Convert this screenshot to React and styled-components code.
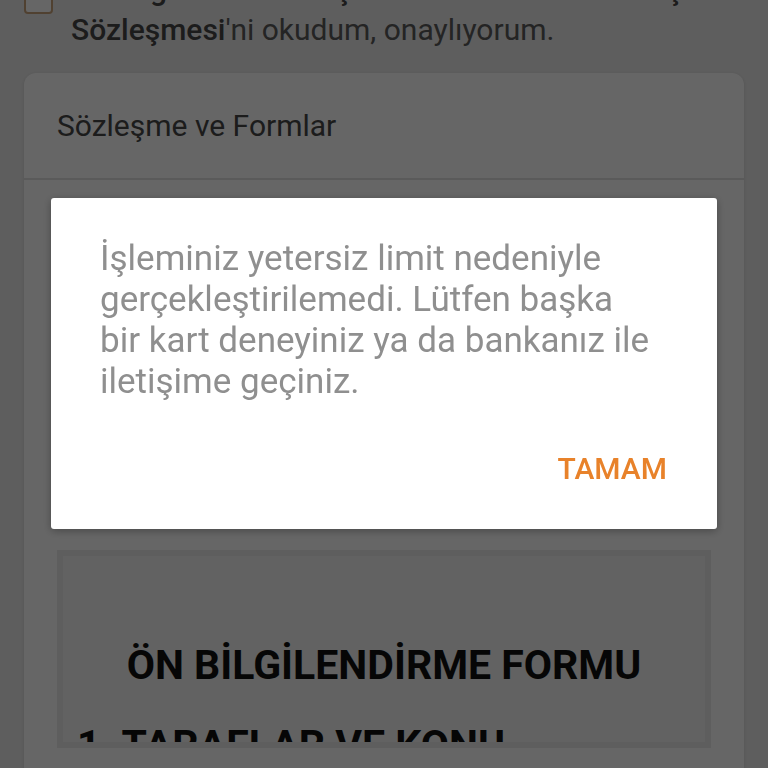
import React from "react";
import styled, { createGlobalStyle } from "styled-components";

const GlobalStyle = createGlobalStyle`
  html, body { margin: 0; padding: 0; }
  body {
    background: #ececec;
    font-family: Roboto, "Noto Sans", "Liberation Sans", sans-serif;
    overflow: hidden;
  }
`;

const Page = styled.div`
  height: 768px;
  overflow: hidden;
  padding: 0 24px;
  box-sizing: border-box;
`;

const ConsentRow = styled.div`
  display: flex;
  align-items: flex-start;
  gap: 18px;
  margin-top: -30px;
`;

const Checkbox = styled.span`
  flex: none;
  width: 29px;
  height: 29px;
  margin-top: 15px;
  border: 2px solid #c9a27a;
  border-radius: 4px;
  box-sizing: border-box;
  background: #fff;
`;

const ConsentText = styled.p`
  margin: 0;
  font-size: 30px;
  line-height: 40px;
  color: #5a5a5a;
  b { font-weight: 500; color: #484848; }
`;

const Card = styled.section`
  margin-top: 23px;
  background: #fff;
  border-radius: 12px;
  box-shadow: 0 1px 4px rgba(0, 0, 0, 0.12);
  overflow: hidden;
`;

const CardHeader = styled.div`
  height: 105px;
  display: flex;
  align-items: center;
  padding: 0 33px;
  font-size: 30px;
  color: #484848;
  border-bottom: 2px solid #e2e2e2;
`;

const CardBody = styled.div`
  padding: 0 33px 40px;
`;

const HiddenLabel = styled.div`
  padding-top: 310px;
  height: 370px;
  box-sizing: border-box;
  font-size: 30px;
  line-height: 36px;
  padding-left: 40px;
  color: #5f5f5f;
`;

const FormBox = styled.div`
  background: #f4f4f4;
  border: 6px solid #ebebeb;
  padding: 85px 14px 0;
  height: 198px;
  box-sizing: border-box;
  overflow: hidden;
`;

const FormTitle = styled.h2`
  margin: 0;
  text-align: center;
  font-size: 41px;
  line-height: 48px;
  font-weight: 700;
  color: #111;
  white-space: nowrap;
`;

const FormSection = styled.h3`
  margin: 32px 0 0;
  font-size: 41px;
  line-height: 48px;
  font-weight: 700;
  color: #111;
  white-space: nowrap;
`;

const Overlay = styled.div`
  position: fixed;
  inset: 0;
  background: rgba(0, 0, 0, 0.6);
`;

const Dialog = styled.div`
  position: fixed;
  left: 51px;
  top: 198px;
  width: 666px;
  height: 331px;
  box-sizing: border-box;
  background: #fff;
  border-radius: 3px;
  box-shadow: 0 2px 8px rgba(0, 0, 0, 0.3);
  padding: 40px 50px 0 49px;
  display: flex;
  flex-direction: column;
`;

const Message = styled.p`
  margin: 0;
  max-width: 558px;
  font-size: 35px;
  line-height: 41px;
  color: #8f8f8f;
`;

const Actions = styled.div`
  display: flex;
  justify-content: flex-end;
  margin-top: 49px;
`;

const ActionButton = styled.button`
  border: none;
  background: none;
  padding: 0;
  font-family: inherit;
  font-size: 30px;
  line-height: 36px;
  font-weight: 500;
  color: #e8822a;
  cursor: pointer;
`;

export default function App() {
  return (
    <>
      <GlobalStyle />
      <Page>
        <ConsentRow>
          <Checkbox />
          <ConsentText>
            <b>Ön Bilgilendirme Koşulları</b>'nı ve <b>Mesafeli Satış</b> <b>Sözleşmesi</b>'ni okudum, onaylıyorum.
          </ConsentText>
        </ConsentRow>
        <Card>
          <CardHeader>Sözleşme ve Formlar</CardHeader>
          <CardBody>
            <HiddenLabel>Ön Bilgilendirme Formu'nu görüntüleyin</HiddenLabel>
            <FormBox>
              <FormTitle>ÖN BİLGİLENDİRME FORMU</FormTitle>
              <FormSection>1. TARAFLAR VE KONU</FormSection>
            </FormBox>
          </CardBody>
        </Card>
      </Page>
      <Overlay />
      <Dialog role="dialog">
        <Message>
          İşleminiz yetersiz limit nedeniyle gerçekleştirilemedi. Lütfen başka bir kart deneyiniz ya da bankanız ile iletişime geçiniz.
        </Message>
        <Actions>
          <ActionButton>TAMAM</ActionButton>
        </Actions>
      </Dialog>
    </>
  );
}
